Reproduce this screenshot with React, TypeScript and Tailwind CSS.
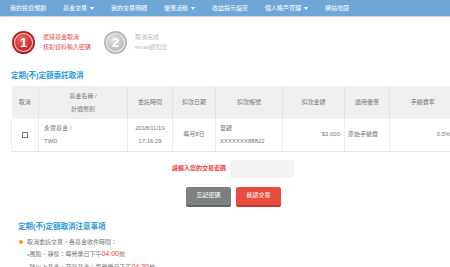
import React from 'react';

const navItems: { label: string; caret?: boolean }[] = [
  { label: '我的投資規劃' },
  { label: '基金交易', caret: true },
  { label: '我的交易明細' },
  { label: '優惠活動', caret: true },
  { label: '收益提示設定' },
  { label: '個人帳戶管理', caret: true },
  { label: '網站地圖' },
];

const Caret = () => (
  <span className="ml-[3px] inline-block w-0 h-0 border-l-[2.5px] border-r-[2.5px] border-t-[3px] border-l-transparent border-r-transparent border-t-white align-middle" />
);

const StepCircle = ({ n, active }: { n: number; active: boolean }) => (
  <div
    className={`w-[23px] h-[23px] rounded-full p-[2px] ${
      active ? 'bg-[#b52222]' : 'bg-[#b9b9b9]'
    }`}
  >
    <div
      className={`w-full h-full rounded-full border border-white/80 flex items-center justify-center text-white font-bold text-[13px] leading-none ${
        active
          ? 'bg-[radial-gradient(circle_at_40%_30%,#ee6b6b,#c62a2a_70%)]'
          : 'bg-[radial-gradient(circle_at_40%_30%,#e2e2e2,#bdbdbd_70%)]'
      }`}
    >
      {n}
    </div>
  </div>
);

const App: React.FC = () => {
  return (
    <div className="w-[450px] h-[267px] overflow-hidden bg-white font-['Liberation_Sans','Noto_Sans_CJK_TC',sans-serif] text-[#666]">
      {/* top nav */}
      <div className="h-[16px] bg-[#6ea6d8] shadow-[0_1px_1px_rgba(0,0,0,0.15)] flex items-center pl-[10px] gap-[17px] text-white text-[6px] whitespace-nowrap">
        {navItems.map(item => (
          <span key={item.label} className="flex items-center">
            {item.label}
            {item.caret && <Caret />}
          </span>
        ))}
      </div>

      {/* steps */}
      <div className="flex items-center h-[46px] pt-[6px] pl-[12px]">
        <StepCircle n={1} active />
        <div className="ml-[8px] text-[6px] leading-[10px] text-[#e84a4a]">
          <div>選擇基金取消</div>
          <div>核對資料輸入密碼</div>
        </div>
        <div className="ml-[13px]">
          <StepCircle n={2} active={false} />
        </div>
        <div className="ml-[8px] text-[6px] leading-[10px] text-[#bdbdbd]">
          <div>取消完成</div>
          <div>email通知您</div>
        </div>
      </div>

      <div className="pl-[11px]">
        <h2 className="text-[7.5px] font-bold text-[#2d9bd8] leading-[10px] mt-[9px] mb-[5px]">定期(不)定額委託取消</h2>

        <table className="w-[444px] border-collapse text-[6px] text-[#777] table-fixed">
          <colgroup>
            <col className="w-[27px]" />
            <col className="w-[89px]" />
            <col className="w-[45px]" />
            <col className="w-[43px]" />
            <col className="w-[67px]" />
            <col className="w-[62px]" />
            <col className="w-[45px]" />
            <col className="w-[66px]" />
          </colgroup>
          <thead>
            <tr className="bg-[#f0f0f0] h-[33px] leading-[13px]">
              <th className="font-normal border-r border-[#e4e4e4]">取消</th>
              <th className="font-normal border-r border-[#e4e4e4]">
                基金名稱 /<br />計價幣別
              </th>
              <th className="font-normal border-r border-[#e4e4e4]">委託時間</th>
              <th className="font-normal border-r border-[#e4e4e4]">扣款日期</th>
              <th className="font-normal border-r border-[#e4e4e4]">扣款帳號</th>
              <th className="font-normal border-r border-[#e4e4e4]">扣款金額</th>
              <th className="font-normal border-r border-[#e4e4e4]">適用優惠</th>
              <th className="font-normal">手續費率</th>
            </tr>
          </thead>
          <tbody>
            <tr className="h-[32px] leading-[13px] border-b border-[#e6e6e6]">
              <td className="text-center border-l border-r border-[#ececec]">
                <span className="inline-block w-[6px] h-[6px] border border-[#777] align-middle" />
              </td>
              <td className="pl-[5px] border-r border-[#ececec]">
                永豐基金 /<br />TWD
              </td>
              <td className="text-center border-r border-[#ececec]">
                2018/11/19<br />17:16:29
              </td>
              <td className="text-center border-r border-[#ececec]">每月8日</td>
              <td className="pl-[4px] border-r border-[#ececec]">
                華銀<br />XXXXXXX88822
              </td>
              <td className="text-right pr-[4px] border-r border-[#ececec]">$3,000</td>
              <td className="pl-[3px] border-r border-[#ececec]">原始手續費</td>
              <td className="text-right pr-[5px]">0.5%</td>
            </tr>
          </tbody>
        </table>

        {/* password */}
        <div className="flex items-center mt-[8px] pl-[161px]">
          <span className="text-[6px] font-bold text-[#e63b3b]">請輸入您的交易密碼</span>
          <div className="ml-[4px] w-[64px] h-[18px] rounded-[2px] bg-[#f3f3f3]" />
        </div>

        <div className="flex mt-[9px] pl-[175px] gap-[5px]">
          <button className="w-[45px] h-[20px] rounded-[2px] bg-[#7d8182] border-b-2 border-[#5f6364] text-white text-[6px]">
            忘記密碼
          </button>
          <button className="w-[45px] h-[20px] rounded-[2px] bg-[#e74c3c] border-b-2 border-[#c0392b] text-white text-[6px]">
            確認交易
          </button>
        </div>

        <div className="pl-[7px] mt-[15px]">
          <h2 className="text-[7.5px] font-bold text-[#2d9bd8] leading-[10px]">定期(不)定額取消注意事項</h2>
          <div className="mt-[4px] text-[6px] leading-[12px] text-[#777]">
            <div className="flex items-center">
              <span className="w-[4px] h-[4px] rounded-full bg-[#f39c12] mr-[4px] ml-[1px]" />
              取消委託交易，各基金收件時間：
            </div>
            <div className="pl-[9px]">
              <span className="text-[#5a9bd4] text-[4px]">●</span>風險、靜態：每營業日下午<span className="text-[#e63b3b] text-[7px]">04:00</span>前
            </div>
            <div className="pl-[9px]">
              <span className="text-[#5a9bd4] text-[4px]">●</span>除以上基金，其餘基金：每營業日下午<span className="text-[#e63b3b] text-[7px]">04:30</span>前
            </div>
          </div>
        </div>
      </div>
    </div>
  );
};

export default App;
